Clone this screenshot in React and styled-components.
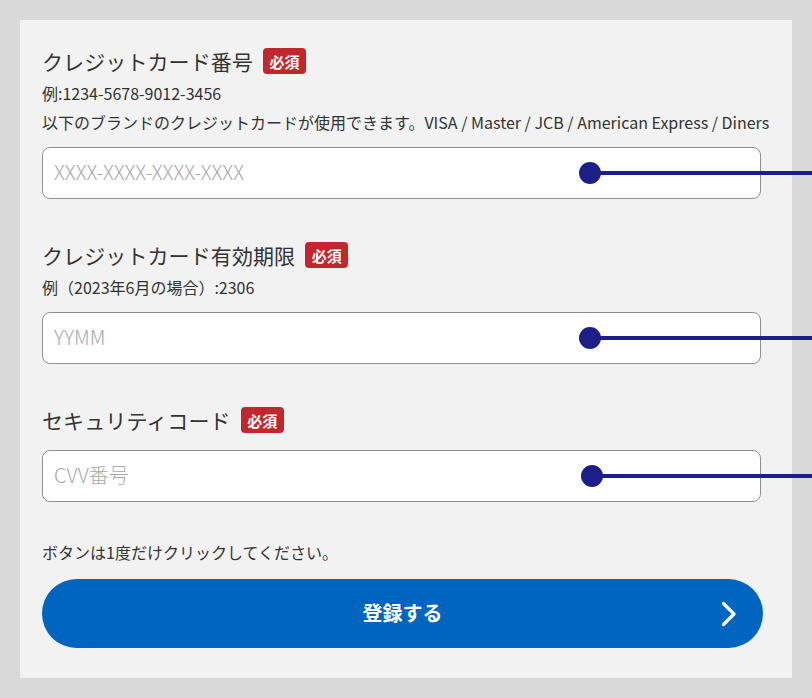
import React from "react";
import styled, { createGlobalStyle } from "styled-components";

const Global = createGlobalStyle`
  html, body {
    margin: 0;
    padding: 0;
    background: #d9d9d9;
    overflow: hidden;
  }
  body {
    font-family: "Noto Sans CJK JP", "Noto Sans", sans-serif;
    color: #333;
  }
  * { box-sizing: border-box; }
`;

const Panel = styled.div`
  margin: 20px;
  width: 772px;
  height: 658px;
  background: #f2f2f2;
  padding: 25px 29px 0 22px;
  display: flex;
  flex-direction: column;
`;

const Field = styled.section`
  display: flex;
  flex-direction: column;
  margin-top: ${(p) => (p.$first ? "0" : "40px")};
`;

const LabelRow = styled.div`
  display: flex;
  align-items: center;
  gap: 10px;
  height: 32px;
`;

const LabelText = styled.span`
  font-size: 21px;
  line-height: 32px;
  color: #333;
  letter-spacing: 0.1px;
`;

const Badge = styled.span`
  display: inline-flex;
  align-items: center;
  justify-content: center;
  height: 26px;
  padding: 0 6.5px;
  border-radius: 4px;
  background: #c1272d;
  color: #fff;
  font-size: 15px;
  font-weight: 700;
  line-height: 1;
`;

const Notes = styled.div`
  margin-top: 2px;
  display: flex;
  flex-direction: column;
`;

const Note = styled.p`
  margin: 0;
  font-size: 16px;
  line-height: 29px;
  color: #333;
  white-space: nowrap;
`;

const InputWrap = styled.div`
  position: relative;
  margin-top: ${(p) => (p.$hasNote ? "10px" : "14px")};
  width: calc(100% - 2px);
`;

const Input = styled.input`
  display: block;
  width: 100%;
  height: 52px;
  border: 1px solid #8e8e8e;
  border-radius: 8px;
  background: #fff;
  padding: 0 11px 3px;
  font-family: "Noto Sans CJK JP", "Noto Sans", sans-serif;
  font-size: 20px;
  font-weight: 300;
  color: #333;
  outline: none;
  &::placeholder {
    color: #a8a8a8;
  }
`;

const Pointer = styled.div`
  position: absolute;
  top: 50%;
  left: ${(p) => p.$left}px;
  right: -51px;
  height: 22px;
  transform: translateY(-50%);
  pointer-events: none;
  &::before {
    content: "";
    position: absolute;
    left: 0;
    top: 0;
    width: 22px;
    height: 22px;
    border-radius: 50%;
    background: #1b1f87;
  }
  &::after {
    content: "";
    position: absolute;
    left: 11px;
    right: 0;
    top: 9px;
    height: 4px;
    background: #1b1f87;
  }
`;

const Notice = styled.p`
  margin: 36px 0 0;
  font-size: 16px;
  line-height: 29px;
  color: #333;
`;

const Submit = styled.button`
  margin-top: 12px;
  width: 100%;
  height: 69px;
  border: none;
  border-radius: 35px;
  background: #0064c1;
  color: #fff;
  display: grid;
  grid-template-columns: 1fr auto 1fr;
  align-items: center;
  padding: 0 26px;
  font-family: "Noto Sans CJK JP", "Noto Sans", sans-serif;
  font-size: 20px;
  font-weight: 700;
  cursor: pointer;
`;

const SubmitLabel = styled.span`
  grid-column: 2;
  line-height: 1;
  padding-bottom: 2px;
`;

const Chevron = styled.svg`
  grid-column: 3;
  justify-self: end;
  display: block;
`;

const fields = [
  {
    label: "クレジットカード番号",
    notes: [
      "例:1234-5678-9012-3456",
      "以下のブランドのクレジットカードが使用できます。VISA / Master / JCB / American Express / Diners",
    ],
    placeholder: "XXXX-XXXX-XXXX-XXXX",
    dot: 537,
  },
  {
    label: "クレジットカード有効期限",
    notes: ["例（2023年6月の場合）:2306"],
    placeholder: "YYMM",
    dot: 537,
  },
  {
    label: "セキュリティコード",
    notes: [],
    placeholder: "CVV番号",
    dot: 539,
  },
];

export default function App() {
  return (
    <>
      <Global />
      <Panel>
        {fields.map((f, i) => (
          <Field key={f.label} $first={i === 0}>
            <LabelRow>
              <LabelText>{f.label}</LabelText>
              <Badge>必須</Badge>
            </LabelRow>
            {f.notes.length > 0 && (
              <Notes>
                {f.notes.map((n) => (
                  <Note key={n}>{n}</Note>
                ))}
              </Notes>
            )}
            <InputWrap $hasNote={f.notes.length > 0}>
              <Input placeholder={f.placeholder} />
              <Pointer $left={f.dot} />
            </InputWrap>
          </Field>
        ))}
        <Notice>ボタンは1度だけクリックしてください。</Notice>
        <Submit type="button">
          <SubmitLabel>登録する</SubmitLabel>
          <Chevron width="16" height="26" viewBox="0 0 16 26">
            <polyline
              points="2.5,2.5 13,13 2.5,23.5"
              fill="none"
              stroke="#fff"
              strokeWidth="3.2"
              strokeLinecap="round"
              strokeLinejoin="round"
            />
          </Chevron>
        </Submit>
      </Panel>
    </>
  );
}
